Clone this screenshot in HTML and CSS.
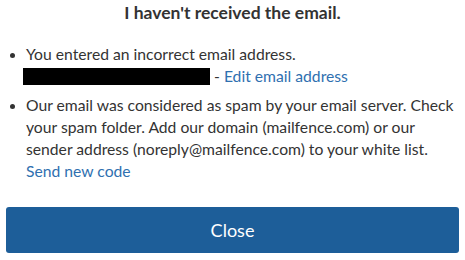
FILE: index.html
```html
<!DOCTYPE html>
<html>
<head>
<meta charset="utf-8">
<link rel="stylesheet" href="styles.css">
</head>
<body>
<div class="dialog">
  <h2 class="title">I haven't received the email.</h2>
  <ul class="reasons">
    <li>You entered an incorrect email address.<br><span class="redacted"></span> - <a class="link" href="#">Edit email address</a></li>
    <li>Our email was considered as spam by your email server. Check your spam folder. Add our domain (mailfence.com) or our sender address (noreply@mailfence.com) to your white list.<br><a class="link" href="#">Send new code</a></li>
  </ul>
  <button class="close-btn">Close</button>
</div>
</body>
</html>
```
FILE: styles.css
```css
html, body {
  margin: 0;
  padding: 0;
  background: #fff;
}
.dialog {
  font-family: Lato, "Open Sans", sans-serif;
  color: #333;
  padding: 0 6px;
}
.title {
  margin: 0;
  padding-top: 2px;
  font-size: 17.5px;
  font-weight: 700;
  line-height: 22px;
  text-align: center;
}
.reasons {
  margin: 19px 0 0;
  padding-left: 20px;
  font-size: 15.7px;
  line-height: 22px;
}
.reasons li {
  margin-bottom: 7px;
}
.reasons li::marker {
  font-size: 14px;
}
.redacted {
  display: inline-block;
  width: 187px;
  height: 17px;
  margin-left: -3px;
  background: #000;
  vertical-align: -3px;
}
.link {
  color: #2f70b0;
  text-decoration: none;
}
.close-btn {
  display: block;
  width: 100%;
  height: 46px;
  margin-top: 25px;
  border: none;
  border-radius: 3px;
  background: #1d5e99;
  color: #fff;
  font-family: Lato, "Open Sans", sans-serif;
  font-size: 18px;
}
```
